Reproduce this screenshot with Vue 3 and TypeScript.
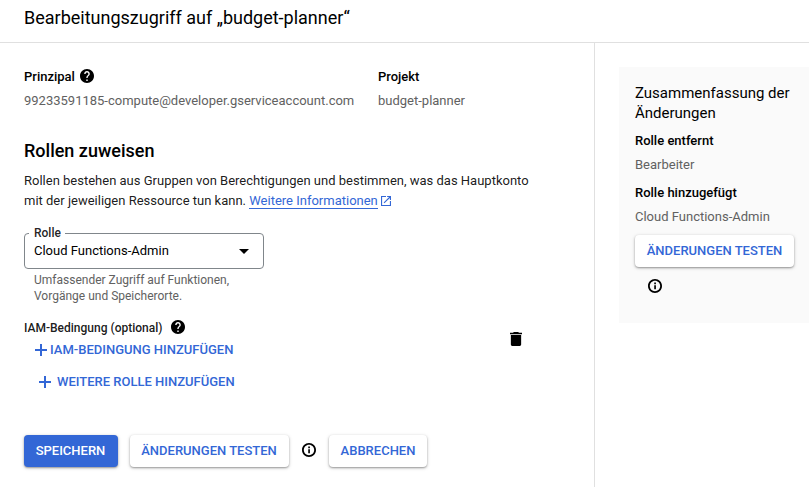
<script setup lang="ts">
const principal = '99233591185-compute@developer.gserviceaccount.com'
const project = 'budget-planner'
const role = 'Cloud Functions-Admin'

const icons = {
  help: 'M12 2C6.48 2 2 6.48 2 12s4.48 10 10 10 10-4.48 10-10S17.52 2 12 2zm1 17h-2v-2h2v2zm2.07-7.75l-.9.92C13.45 12.9 13 13.5 13 15h-2v-.5c0-1.1.45-2.1 1.17-2.83l1.24-1.26c.37-.36.59-.86.59-1.41 0-1.1-.9-2-2-2s-2 .9-2 2H8c0-2.21 1.79-4 4-4s4 1.79 4 4c0 .88-.36 1.68-.93 2.25z',
  info: 'M10.9 16.8h2.4v-6h-2.4v6zM12 2C6.48 2 2 6.48 2 12s4.48 10 10 10 10-4.48 10-10S17.52 2 12 2zm0 17.4c-4.1 0-7.4-3.3-7.4-7.4S7.9 4.6 12 4.6s7.4 3.3 7.4 7.4-3.3 7.4-7.4 7.4zM10.9 9.4h2.4V7h-2.4v2.4z',
  open: 'M19 19H5V5h7V3H3v18h18v-9h-2v7zM14 3v2h3.59l-9.83 9.83 1.41 1.41L19 6.41V10h2V3h-7z',
  trash: 'M6 19c0 1.1.9 2 2 2h8c1.1 0 2-.9 2-2V7H6v12zM19 4h-3.5l-1-1h-5l-1 1H5v2h14V4z',
}
</script>

<template>
  <div class="page">
    <header class="header">
      <h1>Bearbeitungszugriff auf „{{ project }}“</h1>
    </header>
    <div class="body">
      <main class="main">
        <section class="facts">
          <div class="fact fact-principal">
            <div class="label">
              Prinzipal
              <svg class="round-icon principal-help" viewBox="2 2 20 20"><path :d="icons.help" /></svg>
            </div>
            <div class="value">{{ principal }}</div>
          </div>
          <div class="fact">
            <div class="label">Projekt</div>
            <div class="value">{{ project }}</div>
          </div>
        </section>

        <h2>Rollen zuweisen</h2>
        <p class="intro">
          Rollen bestehen aus Gruppen von Berechtigungen und bestimmen, was das Hauptkonto<br />
          mit der jeweiligen Ressource tun kann.
          <a class="link">Weitere Informationen</a><svg class="open-icon" viewBox="3 3 18 18"><path :d="icons.open" /></svg>
        </p>

        <section class="role-row">
          <div class="role-fields">
            <div class="select">
              <span class="select-label">Rolle</span>
              <span>{{ role }}</span>
              <svg class="caret" viewBox="0 0 10 5"><path d="M0 0h10L5 5z" /></svg>
            </div>
            <p class="hint">Umfassender Zugriff auf Funktionen,<br />Vorgänge und Speicherorte.</p>
            <div class="condition-label">
              <span class="condition-text">IAM-Bedingung (optional)</span>
              <svg class="round-icon" viewBox="2 2 20 20"><path :d="icons.help" /></svg>
            </div>
            <button class="text-button add-condition">
              <svg class="plus" viewBox="0 0 12 12"><path d="M5 0h2v5h5v2H7v5H5V7H0V5h5z" /></svg>
              IAM-BEDINGUNG HINZUFÜGEN
            </button>
          </div>
          <svg class="trash" viewBox="5 3 14 18" preserveAspectRatio="none"><path :d="icons.trash" /></svg>
        </section>
        <button class="text-button add-role">
          <svg class="plus" viewBox="0 0 12 12"><path d="M5 0h2v5h5v2H7v5H5V7H0V5h5z" /></svg>
          WEITERE ROLLE HINZUFÜGEN
        </button>

        <footer class="actions">
          <button class="button primary save">SPEICHERN</button>
          <button class="button test">ÄNDERUNGEN TESTEN</button>
          <svg class="round-icon action-info" viewBox="2 2 20 20"><path :d="icons.info" /></svg>
          <button class="button cancel">ABBRECHEN</button>
        </footer>
      </main>

      <aside class="side">
        <div class="summary">
          <h3>Zusammenfassung der Änderungen</h3>
          <div class="label">Rolle entfernt</div>
          <div class="value">Bearbeiter</div>
          <div class="label">Rolle hinzugefügt</div>
          <div class="value">{{ role }}</div>
          <button class="button test side-test">ÄNDERUNGEN TESTEN</button>
          <svg class="round-icon side-info" viewBox="2 2 20 20"><path :d="icons.info" /></svg>
        </div>
      </aside>
    </div>
  </div>
</template>

<style>
body {
  background: #fff;
  overflow: hidden;
}
</style>

<style scoped>
.page,
.page * {
  box-sizing: border-box;
}
.page {
  width: 809px;
  height: 487px;
  display: flex;
  flex-direction: column;
  font-family: Roboto, sans-serif;
  font-size: 13px;
  line-height: 20px;
  color: rgba(0, 0, 0, 0.9);
}
h1,
h2,
h3,
p {
  margin: 0;
}
svg {
  display: block;
  fill: currentColor;
  flex: none;
}
.header {
  height: 43px;
  padding: 6px 24px 0;
  border-bottom: 1px solid #e0e0e0;
}
h1 {
  font-size: 18px;
  font-weight: 400;
  line-height: 24px;
  color: #000;
}
.body {
  flex: 1;
  display: flex;
}
.main {
  width: 594px;
  padding: 24px 24px 0;
  display: flex;
  flex-direction: column;
}
.facts {
  display: flex;
}
.fact-principal {
  width: 354px;
}
.label {
  display: flex;
  align-items: center;
  gap: 5px;
  height: 20px;
  font-weight: 500;
  color: #000;
}
.round-icon {
  width: 14px;
  height: 14px;
  color: #000;
}
.principal-help {
  margin-bottom: 2px;
}
.value {
  margin-top: 4px;
  color: #616161;
}
h2 {
  margin-top: 28px;
  font-size: 18px;
  font-weight: 500;
  line-height: 24px;
  color: #000;
}
.intro {
  margin-top: 8px;
  white-space: nowrap;
}
.link {
  color: #3367d6;
  border-bottom: 1px solid #3367d6;
}
.open-icon {
  display: inline-block;
  width: 10px;
  height: 10px;
  margin-left: 3px;
  vertical-align: -1px;
  color: #3367d6;
}
.role-row {
  margin-top: 22px;
  display: flex;
  justify-content: space-between;
}
.select {
  position: relative;
  width: 240px;
  height: 36px;
  padding: 0 14px 0 9px;
  display: flex;
  align-items: center;
  justify-content: space-between;
  border: 1px solid #80868b;
  border-radius: 4px;
  color: #000;
}
.select-label {
  position: absolute;
  left: 4px;
  top: -9px;
  padding: 0 4px 0 5px;
  background: #fff;
  font-size: 12px;
  font-weight: 500;
  line-height: 16px;
  color: rgba(0, 0, 0, 0.87);
}
.caret {
  width: 10px;
  height: 5px;
}
.hint {
  margin: 3px 0 0 10px;
  font-size: 12px;
  line-height: 16px;
  color: #616161;
}
.condition-label {
  margin-top: 13px;
  height: 20px;
  display: flex;
  align-items: center;
  gap: 9px;
  font-size: 12px;
  font-weight: 500;
}
.condition-text {
  padding-top: 2px;
}
.text-button {
  display: flex;
  align-items: center;
  height: 20px;
  padding: 0;
  border: 0;
  background: none;
  font: 500 13px/20px Roboto, sans-serif;
  color: #3367d6;
}
.plus {
  width: 12px;
  height: 12px;
}
.add-condition {
  margin: 3px 0 0 11px;
  gap: 3px;
}
.add-role {
  margin: 12px 0 0 15px;
  gap: 6px;
}
.trash {
  width: 12px;
  height: 14px;
  margin: 99px 48px 0 0;
  color: #000;
}
.actions {
  margin-top: 43px;
  display: flex;
  align-items: center;
}
.button {
  height: 32px;
  padding: 0;
  border: 0;
  border-radius: 4px;
  background: #fff;
  font: 500 13px/32px Roboto, sans-serif;
  color: #3367d6;
  box-shadow: 0 1px 2px rgba(0, 0, 0, 0.34), 0 1px 4px rgba(0, 0, 0, 0.14);
}
.primary {
  background: #3367d6;
  color: #fff;
}
.save {
  width: 94px;
  margin-right: 12px;
  padding-right: 1px;
}
.test {
  width: 159px;
}
.actions .test {
  padding-right: 1px;
}
.action-info {
  margin: 0 13px 2px;
}
.cancel {
  width: 98px;
}
.side {
  flex: 1;
  border-left: 1px solid #e0e0e0;
  padding: 24px 0 0 24px;
}
.summary {
  height: 256px;
  padding: 16px 15px 0 16px;
  background: #fafafa;
}
h3 {
  font-size: 15px;
  font-weight: 400;
  line-height: 20px;
  color: #000;
}
.summary .label {
  margin-top: 8px;
}
.side-test {
  display: block;
  margin-top: 8px;
}
.side-info {
  margin: 12px 0 0 13px;
}
</style>
